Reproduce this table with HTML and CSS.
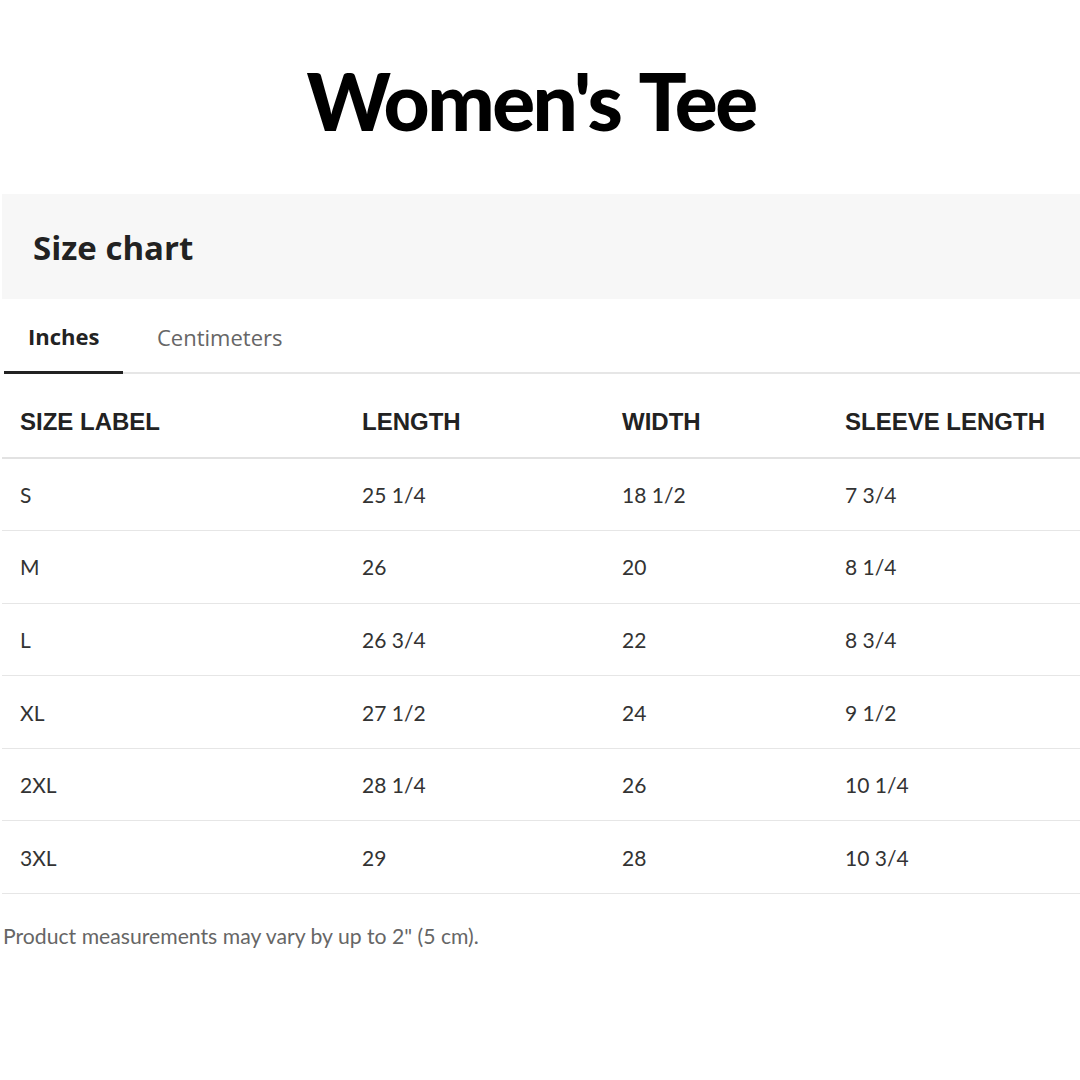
FILE: index.html
```html
<!DOCTYPE html>
<html>
<head>
<meta charset="utf-8">
<link rel="stylesheet" href="styles.css">
</head>
<body>
<h1 class="title">Women's Tee</h1>
<div class="chart">
  <div class="chart-head">Size chart</div>
  <div class="tabs">
    <div class="tab active">Inches</div>
    <div class="tab">Centimeters</div>
  </div>
  <table class="sizes">
    <thead>
      <tr><th class="c1">SIZE LABEL</th><th class="c2">LENGTH</th><th class="c3">WIDTH</th><th class="c4">SLEEVE LENGTH</th></tr>
    </thead>
    <tbody>
      <tr><td>S</td><td>25 1/4</td><td>18 1/2</td><td>7 3/4</td></tr>
      <tr><td>M</td><td>26</td><td>20</td><td>8 1/4</td></tr>
      <tr><td>L</td><td>26 3/4</td><td>22</td><td>8 3/4</td></tr>
      <tr><td>XL</td><td>27 1/2</td><td>24</td><td>9 1/2</td></tr>
      <tr><td>2XL</td><td>28 1/4</td><td>26</td><td>10 1/4</td></tr>
      <tr><td>3XL</td><td>29</td><td>28</td><td>10 3/4</td></tr>
    </tbody>
  </table>
  <p class="note">Product measurements may vary by up to 2" (5 cm).</p>
</div>
</body>
</html>
```
FILE: styles.css
```css
html, body {
  margin: 0;
  padding: 0;
  background: #ffffff;
}
body {
  width: 1080px;
  height: 1080px;
  overflow: hidden;
  font-family: "Lato", "Open Sans", sans-serif;
}
.title {
  margin: 0;
  padding: 60px 18px 0 0;
  height: 136px;
  box-sizing: border-box;
  text-align: center;
  font-family: "Lato", sans-serif;
  font-weight: 900;
  font-size: 80px;
  line-height: 80px;
  color: #000;
  letter-spacing: -2.5px;
  word-spacing: 4px;
}
.chart {
  margin-top: 58px;
  padding-left: 2px;
}
.chart-head {
  height: 105px;
  background: #f7f7f7;
  display: flex;
  align-items: center;
  padding-left: 31px;
  font-family: "Open Sans", sans-serif;
  font-weight: 700;
  font-size: 33px;
  color: #222;
  padding-top: 2px;
  box-sizing: border-box;
}
.tabs {
  display: flex;
  height: 75px;
  border-bottom: 2px solid #e6e6e6;
  box-sizing: border-box;
  margin-left: 2px;
}
.tab {
  display: flex;
  align-items: center;
  padding: 2px 0 0 0;
  font-size: 22px;
  color: #666;
  font-family: "Open Sans", sans-serif;
}
.tab.active {
  width: 119px;
  padding-left: 24px;
  box-sizing: border-box;
  font-weight: 700;
  color: #222;
  border-bottom: 3px solid #222;
  margin-bottom: -2px;
}
.tab + .tab {
  margin-left: 34px;
}
.sizes {
  width: 1078px;
  border-collapse: collapse;
}
.sizes th {
  text-align: left;
  font-family: "Liberation Sans", Arial, sans-serif;
  font-weight: 700;
  font-size: 24px;
  color: #222;
  height: 84px;
  padding: 12px 0 0 18px;
  box-sizing: border-box;
  border-bottom: 2px solid #e2e2e2;
}
.sizes .c1 { width: 342px; }
.sizes .c2 { width: 260px; }
.sizes .c3 { width: 223px; }
.sizes td {
  font-family: "Lato", sans-serif;
  font-size: 21px;
  color: #333;
  height: 72.6px;
  padding: 0 0 0 18px;
  box-sizing: border-box;
  border-bottom: 1px solid #e6e6e6;
}
.note {
  margin: 29px 0 0 1px;
  font-family: "Lato", sans-serif;
  font-size: 21.2px;
  color: #666;
}
```
